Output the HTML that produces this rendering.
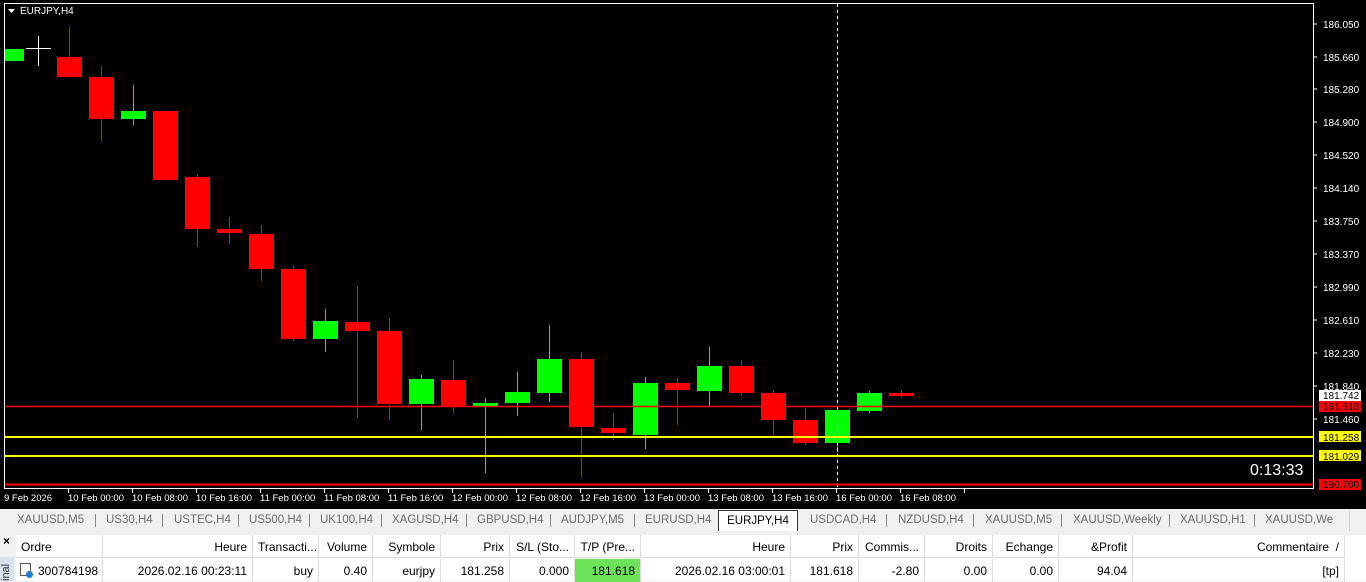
<!DOCTYPE html>
<html><head><meta charset="utf-8"><style>
*{margin:0;padding:0;box-sizing:border-box}
body{width:1366px;height:581px;overflow:hidden;background:#f0f0f0;font-family:"Liberation Sans",sans-serif;position:relative}
#chart{position:absolute;left:0;top:0}
.tabs{position:absolute;left:0;top:509px;width:1366px;height:22px;background:#f0f0f0;font-size:11.5px;color:#6d6d6d}
.tab{position:absolute;top:5px;white-space:nowrap}
.sep{position:absolute;top:5px;width:1px;height:13px;background:#888}
.act{position:absolute;left:718px;top:1px;width:80px;height:21px;background:#fff;border:1px solid #333;border-bottom:none;color:#000;text-align:center;padding-top:4px}
.tbl{position:absolute;left:16px;top:535px;width:1350px;height:46px;background:#fff;font-size:12px;color:#000}
.c{position:absolute;height:23px;border-right:1px solid #dcdcdc;padding:5px 5px 0;white-space:nowrap;overflow:hidden}
.h{top:0;border-bottom:1px solid #dcdcdc}
.r{top:24px}
.R{text-align:right}
.left{position:absolute;left:0;top:531px;width:16px;height:50px;background:#f0f0f0}
</style></head><body>
<svg id="chart" width="1366" height="509" xmlns="http://www.w3.org/2000/svg" font-family="Liberation Sans, sans-serif">
<rect width="1366" height="509" fill="#000"/>
<rect x="4.5" y="3.5" width="1309" height="485" fill="none" stroke="#fff"/>
<g id="c"></g>
<line x1="837.5" y1="4" x2="837.5" y2="488" stroke="#fff" stroke-dasharray="3,3"/>
<line x1="5" y1="406.5" x2="1313" y2="406.5" stroke="#f00" stroke-width="1.5"/>
<line x1="5" y1="437" x2="1313" y2="437" stroke="#ff0" stroke-width="2"/>
<line x1="5" y1="456" x2="1313" y2="456" stroke="#ff0" stroke-width="2"/>
<line x1="5" y1="484.5" x2="1313" y2="484.5" stroke="#f00" stroke-width="2"/>
<g stroke="#fff"><line x1="26" y1="48.5" x2="51" y2="48.5"/><line x1="38.5" y1="36" x2="38.5" y2="66"/></g>
<path d="M8 9h7l-3.5 4z" fill="#fff"/>
<text x="20" y="14" fill="#fff" font-size="10">EURJPY,H4</text>
<text x="1250" y="475" fill="#fff" font-size="16">0:13:33</text>
<g fill="#fff" font-size="10">
<text x="1323" y="28">186.050</text><text x="1323" y="61">185.660</text><text x="1323" y="93">185.280</text><text x="1323" y="126">184.900</text><text x="1323" y="159">184.520</text><text x="1323" y="192">184.140</text><text x="1323" y="225">183.750</text><text x="1323" y="258">183.370</text><text x="1323" y="291">182.990</text><text x="1323" y="324">182.610</text><text x="1323" y="357">182.230</text><text x="1323" y="390">181.840</text><text x="1323" y="423">181.460</text>
</g>
<g stroke="#fff"><line x1="1313" y1="24" x2="1317" y2="24"/><line x1="1313" y1="57" x2="1317" y2="57"/><line x1="1313" y1="89" x2="1317" y2="89"/><line x1="1313" y1="122" x2="1317" y2="122"/><line x1="1313" y1="155" x2="1317" y2="155"/><line x1="1313" y1="188" x2="1317" y2="188"/><line x1="1313" y1="221" x2="1317" y2="221"/><line x1="1313" y1="254" x2="1317" y2="254"/><line x1="1313" y1="287" x2="1317" y2="287"/><line x1="1313" y1="320" x2="1317" y2="320"/><line x1="1313" y1="353" x2="1317" y2="353"/><line x1="1313" y1="386" x2="1317" y2="386"/><line x1="1313" y1="419" x2="1317" y2="419"/></g>
<rect x="1319" y="390" width="42" height="11" fill="#fff"/><text x="1323" y="399" font-size="10" fill="#000">181.742</text>
<rect x="1319" y="401" width="42" height="11" fill="#f00"/><text x="1323" y="410" font-size="10" fill="#000">181.618</text>
<rect x="1319" y="431" width="42" height="11" fill="#ff0"/><text x="1323" y="441" font-size="10" fill="#000">181.258</text>
<rect x="1319" y="450" width="42" height="11" fill="#ff0"/><text x="1323" y="460" font-size="10" fill="#000">181.029</text>
<rect x="1319" y="479" width="42" height="11" fill="#f00"/><text x="1323" y="488" font-size="10" fill="#000">180.700</text>
<g fill="#fff" font-size="9.5" id="t"></g>
</svg>
<script>
var C=[[11,'g',49,61,49,61],[69,'r',57,77,27,77],[101,'r',77,119,66,141],[133,'g',111,119,85,125],[165,'r',111,180,111,180],[197,'r',177,229,174,247],[229,'r',229,233,217,244],[261,'r',234,269,225,281],[293,'r',269,339,266,341],[325,'g',321,339,309,352],[357,'r',322,331,286,418],[389,'r',331,404,318,420],[421,'g',379,404,375,430],[453,'r',380,407,360,413],[485,'g',403,407,398,473],[517,'g',392,403,372,416],[549,'g',359,393,325,402],[581,'r',359,427,352,477],[613,'r',428,433,413,440],[645,'g',383,435,377,449],[677,'r',383,390,378,425],[709,'g',366,391,347,407],[741,'r',366,393,360,396],[773,'r',393,420,390,438],[805,'r',420,443,408,445],[837,'g',410,443,406,452],[869,'g',393,411,391,413],[901,'r',393,396,390,397]];
var s='';C.forEach(function(k){var col=k[1]=='g'?'#0f0':'#f00';var x0=Math.max(5,k[0]-12);s+='<line x1="'+(k[0]+.5)+'" y1="'+k[4]+'" x2="'+(k[0]+.5)+'" y2="'+k[5]+'" stroke="'+col+'"/><rect x="'+x0+'" y="'+k[2]+'" width="'+(k[0]+13-x0)+'" height="'+Math.max(2,k[3]-k[2])+'" fill="'+col+'"/>';});
document.getElementById('c').innerHTML=s;
var T=['9 Feb 2026','10 Feb 00:00','10 Feb 08:00','10 Feb 16:00','11 Feb 00:00','11 Feb 08:00','11 Feb 16:00','12 Feb 00:00','12 Feb 08:00','12 Feb 16:00','13 Feb 00:00','13 Feb 08:00','13 Feb 16:00','16 Feb 00:00','16 Feb 08:00'];
var t='';T.forEach(function(n,i){var x=4+i*64;t+='<text x="'+x+'" y="501">'+n+'</text><line x1="'+(x+64)+'.5" y1="489" x2="'+(x+64)+'.5" y2="493" stroke="#fff"/>';});
document.getElementById('t').innerHTML=t;
</script>
<div class="tabs">
<span class="tab" style="left:17px">XAUUSD,M5</span><span class="sep" style="left:95px"></span>
<span class="tab" style="left:106px">US30,H4</span><span class="sep" style="left:162px"></span>
<span class="tab" style="left:174px">USTEC,H4</span><span class="sep" style="left:238px"></span>
<span class="tab" style="left:249px">US500,H4</span><span class="sep" style="left:309px"></span>
<span class="tab" style="left:320px">UK100,H4</span><span class="sep" style="left:381px"></span>
<span class="tab" style="left:392px">XAGUSD,H4</span><span class="sep" style="left:466px"></span>
<span class="tab" style="left:477px">GBPUSD,H4</span><span class="sep" style="left:550px"></span>
<span class="tab" style="left:561px">AUDJPY,M5</span><span class="sep" style="left:634px"></span>
<span class="tab" style="left:645px">EURUSD,H4</span>
<div class="act">EURJPY,H4</div>
<span class="tab" style="left:810px">USDCAD,H4</span><span class="sep" style="left:886px"></span>
<span class="tab" style="left:898px">NZDUSD,H4</span><span class="sep" style="left:973px"></span>
<span class="tab" style="left:985px">XAUUSD,M5</span><span class="sep" style="left:1061px"></span>
<span class="tab" style="left:1073px">XAUUSD,Weekly</span><span class="sep" style="left:1169px"></span>
<span class="tab" style="left:1180px">XAUUSD,H1</span><span class="sep" style="left:1254px"></span>
<span class="tab" style="left:1265px">XAUUSD,We</span>
<div style="position:absolute;left:1349px;top:2px;width:17px;height:20px;background:#f0f0f0;border-left:1px solid #ccc"></div>
</div>
<div class="left"><div style="position:absolute;left:3px;top:3px;font-size:12px;font-weight:bold">×</div><div style="position:absolute;left:0;top:26px;width:14px;height:24px;background:#d8e2ee;font-size:11px;color:#333;writing-mode:vertical-rl;transform:rotate(180deg);overflow:hidden">inal</div></div>
<div class="tbl">
<div class="c h" style="left:0;width:87px">Ordre</div><div class="c h R" style="left:87px;width:150px">Heure</div><div class="c h R" style="left:237px;width:66px">Transacti...</div><div class="c h R" style="left:303px;width:54px">Volume</div><div class="c h R" style="left:357px;width:68px">Symbole</div><div class="c h R" style="left:425px;width:69px">Prix</div><div class="c h R" style="left:494px;width:65px">S/L (Sto...</div><div class="c h R" style="left:559px;width:66px">T/P (Pre...</div><div class="c h R" style="left:625px;width:150px">Heure</div><div class="c h R" style="left:775px;width:68px">Prix</div><div class="c h R" style="left:843px;width:66px">Commis...</div><div class="c h R" style="left:909px;width:68px">Droits</div><div class="c h R" style="left:977px;width:66px">Echange</div><div class="c h R" style="left:1043px;width:74px">&amp;Profit</div><div class="c h R" style="left:1117px;width:212px">Commentaire &nbsp;/</div>
<div class="c r" style="left:0;width:87px;padding-left:22px"><span style="position:absolute;left:4px;top:4px;width:11px;height:13px;border:1px solid #555;background:#fff"></span><span style="position:absolute;left:10px;top:12px;width:7px;height:7px;border-radius:50%;background:#1a7fd6"></span>300784198</div>
<div class="c r R" style="left:87px;width:150px">2026.02.16 00:23:11</div><div class="c r R" style="left:237px;width:66px">buy</div><div class="c r R" style="left:303px;width:54px">0.40</div><div class="c r R" style="left:357px;width:68px">eurjpy</div><div class="c r R" style="left:425px;width:69px">181.258</div><div class="c r R" style="left:494px;width:65px">0.000</div><div class="c r R" style="left:559px;width:66px;background:#6ee35a">181.618</div><div class="c r R" style="left:625px;width:150px">2026.02.16 03:00:01</div><div class="c r R" style="left:775px;width:68px">181.618</div><div class="c r R" style="left:843px;width:66px">-2.80</div><div class="c r R" style="left:909px;width:68px">0.00</div><div class="c r R" style="left:977px;width:66px">0.00</div><div class="c r R" style="left:1043px;width:74px">94.04</div><div class="c r R" style="left:1117px;width:212px">[tp]</div>
</div>
</body></html>
